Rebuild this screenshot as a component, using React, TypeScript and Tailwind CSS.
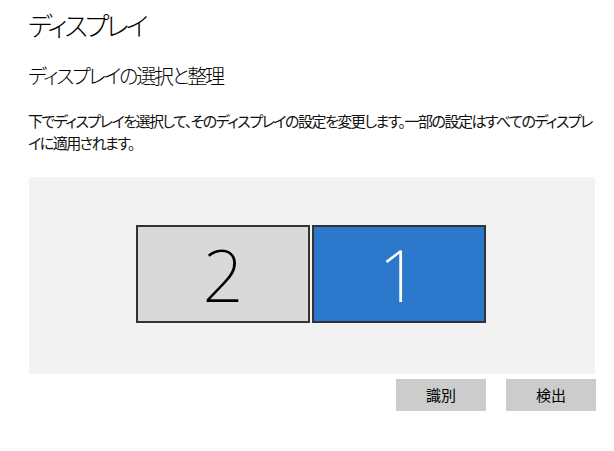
const jp = "font-['Noto_Sans_CJK_JP','Noto_Sans',sans-serif] [font-feature-settings:'palt']"

function Monitor({ n, active }: { n: string; active?: boolean }) {
  return (
    <div
      className={`flex h-[98px] w-[174px] items-center justify-center border-2 border-[#333333] ${
        active ? 'bg-[#2b78cc] text-white' : 'bg-[#d9d9d9] text-black'
      }`}
    >
      <span className="font-['Noto_Sans',sans-serif] text-[72px] font-extralight leading-none">{n}</span>
    </div>
  )
}

export default function App() {
  return (
    <div className={`h-[451px] w-[614px] overflow-hidden bg-white pl-[28px] pt-[9px] text-black ${jp}`}>
      <h1 className="text-[26px] font-light leading-[32px] tracking-[-3px]">ディスプレイ</h1>
      <h2 className="mt-[21px] text-[20px] font-light leading-[28px] tracking-[-2.2px]">ディスプレイの選択と整理</h2>
      <p className="mt-[20px] whitespace-nowrap text-[15px] leading-[22px] tracking-[-1.5px] text-[#111111]">
        下でディスプレイを選択して、そのディスプレイの設定を変更します。一部の設定はすべてのディスプレ
        <br />
        イに適用されます。
      </p>

      {/* arrange area */}
      <div className="mt-[23px] ml-[1px] h-[197px] w-[566px] bg-[#f2f2f2] pl-[107px] pt-[48px]">
        <div className="flex gap-[2px]">
          <Monitor n="2" />
          <Monitor n="1" active />
        </div>
      </div>

      <div className="mt-[5px] flex w-[568px] justify-end gap-[20px]">
        <button className="h-[32px] w-[90px] bg-[#cccccc] text-[15px] text-black">識別</button>
        <button className="h-[32px] w-[90px] bg-[#cccccc] text-[15px] text-black">検出</button>
      </div>
    </div>
  )
}
